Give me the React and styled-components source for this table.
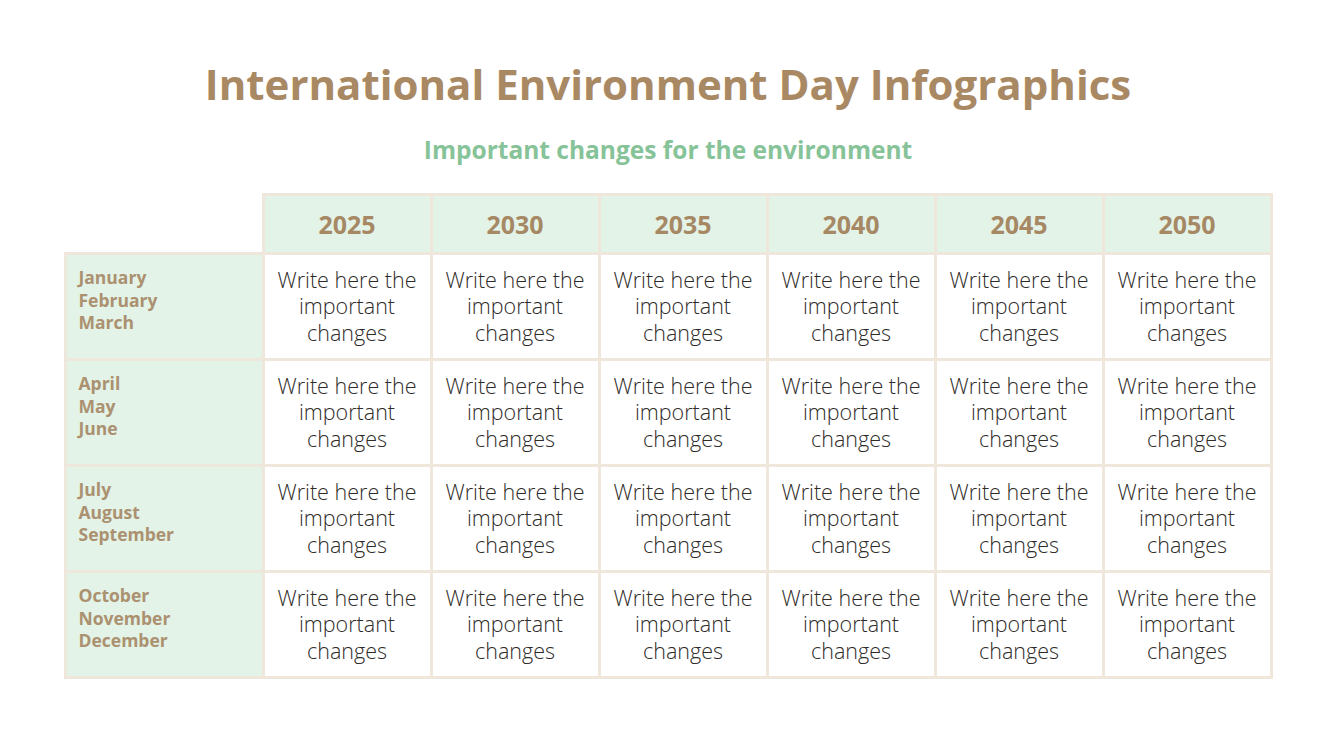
import React from 'react';
import styled, { createGlobalStyle } from 'styled-components';

const BORDER = '#efe6dc';
const BROWN = '#a98963';
const GREEN_BG = '#e3f3e7';

const GlobalStyle = createGlobalStyle`
  body {
    margin: 0;
    background: #ffffff;
    font-family: "Open Sans", "Liberation Sans", sans-serif;
  }
`;

const years = ['2025', '2030', '2035', '2040', '2045', '2050'];
const quarters = [
  ['January', 'February', 'March'],
  ['April', 'May', 'June'],
  ['July', 'August', 'September'],
  ['October', 'November', 'December'],
];

const App = () => {
  return (
    <Page>
      <GlobalStyle />
      <Title>International Environment Day Infographics</Title>
      <Subtitle>Important changes for the environment</Subtitle>
      <Table>
        <colgroup>
          <col style={{ width: 198 }} />
          {years.map((y) => <col key={y} style={{ width: 168 }} />)}
        </colgroup>
        <thead>
          <tr>
            <Corner />
            {years.map((y) => <Year key={y}>{y}</Year>)}
          </tr>
        </thead>
        <tbody>
          {quarters.map((months) => (
            <tr key={months[0]}>
              <Months>
                {months.map((m) => <div key={m}>{m}</div>)}
              </Months>
              {years.map((y) => (
                <Cell key={y}>Write here the important changes</Cell>
              ))}
            </tr>
          ))}
        </tbody>
      </Table>
    </Page>
  );
};

const Page = styled.div`
  width: 1336px;
  height: 752px;
  display: flex;
  flex-direction: column;
  align-items: center;
  padding-top: 54px;
  box-sizing: border-box;
`;

const Title = styled.h1`
  margin: 0;
  font-size: 42px;
  font-weight: 700;
  color: ${BROWN};
  line-height: 60px;
`;

const Subtitle = styled.h2`
  margin: 20px 0 0;
  font-size: 24.5px;
  font-weight: 700;
  color: #86c398;
  line-height: 32px;
`;

const Table = styled.table`
  margin-top: 27px;
  width: 1206px;
  table-layout: fixed;
  border-collapse: collapse;
`;

const Corner = styled.th`
  border: none;
  background: transparent;
`;

const Year = styled.th`
  height: 59px;
  border: 3px solid ${BORDER};
  background: ${GREEN_BG};
  color: #a68964;
  font-size: 25px;
  font-weight: 700;
  text-align: center;
  vertical-align: middle;
  box-sizing: border-box;
`;

const Months = styled.td`
  height: 106px;
  border: 3px solid ${BORDER};
  background: ${GREEN_BG};
  color: #ab9170;
  font-size: 17.5px;
  font-weight: 700;
  line-height: 22.5px;
  padding: 11px 12px;
  vertical-align: top;
  box-sizing: border-box;
`;

const Cell = styled.td`
  border: 3px solid ${BORDER};
  background: #ffffff;
  color: #2e2b28;
  font-size: 21.5px;
  font-weight: 300;
  line-height: 26.5px;
  text-align: center;
  vertical-align: middle;
  padding: 0 8px;
`;

export default App;
